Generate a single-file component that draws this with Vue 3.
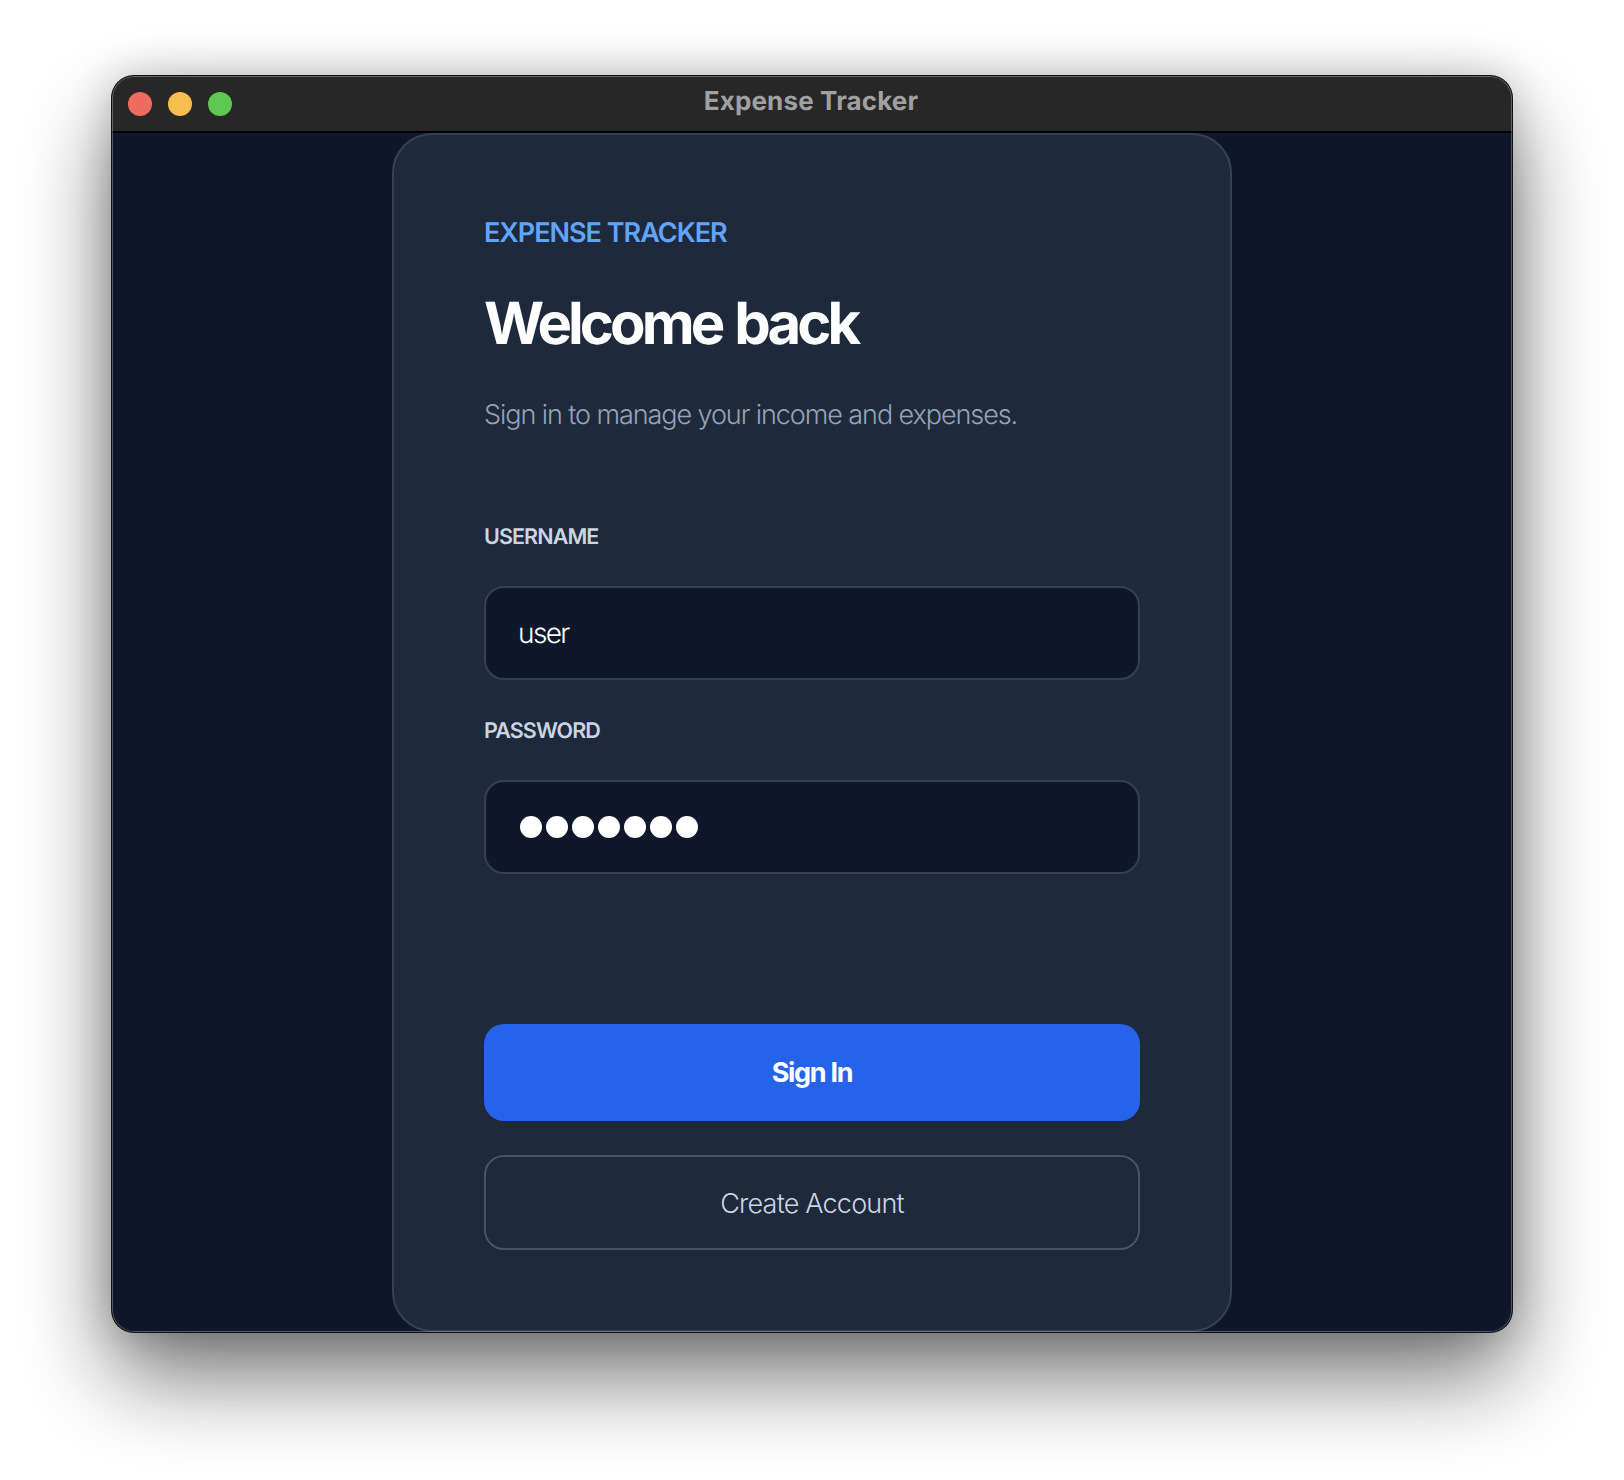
<script setup>
const dots = 7
</script>

<template>
  <div class="stage">
    <div class="window">
      <header class="titlebar">
        <div class="lights">
          <span class="light red"></span>
          <span class="light yellow"></span>
          <span class="light green"></span>
        </div>
        <div class="wintitle">Expense Tracker</div>
      </header>
      <main class="content">
        <section class="card">
          <div class="eyebrow">EXPENSE TRACKER</div>
          <h1 class="title">Welcome back</h1>
          <p class="sub">Sign in to manage your income and expenses.</p>
          <div class="label first">USERNAME</div>
          <div class="field">user</div>
          <div class="label second">PASSWORD</div>
          <div class="field">
            <div class="dots"><span v-for="n in dots" :key="n" class="dot"></span></div>
          </div>
          <button class="btn primary">Sign In</button>
          <button class="btn secondary">Create Account</button>
        </section>
      </main>
    </div>
  </div>
</template>

<style>
html, body { margin: 0; background: #fff; }
</style>

<style scoped>
.stage {
  width: 1624px;
  height: 1480px;
  box-sizing: border-box;
  padding: 76px 112px 148px;
  background: #fff;
  overflow: hidden;
  font-family: Inter, "Noto Sans", sans-serif;
  text-rendering: geometricPrecision;
}
.window {
  position: relative;
  width: 1400px;
  height: 1256px;
  border-radius: 22px;
  overflow: hidden;
  display: flex;
  flex-direction: column;
  background: #0f172a;
  box-shadow: 0 0 0 1px #111, 0 44px 90px rgba(0,0,0,.55), 0 0 40px rgba(0,0,0,.2);
}
.window::after {
  content: "";
  position: absolute;
  inset: 0;
  border-radius: 22px;
  box-shadow: inset 0 0 0 1px rgba(255,255,255,.28);
  pointer-events: none;
}
.titlebar {
  height: 57px;
  flex: none;
  box-sizing: border-box;
  background: #272727;
  border-bottom: 2px solid #000;
  display: flex;
  align-items: center;
  justify-content: center;
  position: relative;
}
.lights {
  position: absolute;
  left: 16px;
  top: 16px;
  display: flex;
  gap: 16px;
}
.light { width: 24px; height: 24px; border-radius: 50%; }
.red { background: #ee6b5f; }
.yellow { background: #f6bd4f; }
.green { background: #5fc853; }
.wintitle {
  color: #a0a0a0;
  font-weight: 700;
  font-size: 26px;
  letter-spacing: .15px;
  margin: 0 2px 5px 0;
}
.content {
  flex: 1;
  min-height: 0;
  display: flex;
  justify-content: center;
}
.card {
  width: 840px;
  box-sizing: border-box;
  background: #1e293b;
  border: 2px solid #334155;
  border-radius: 40px;
  padding: 81px 90px 0;
  display: flex;
  flex-direction: column;
}
.eyebrow {
  color: #60a5fa;
  font-size: 27px;
  line-height: 34px;
  font-weight: 600;
  letter-spacing: -1px;
}
.title {
  margin: 37px 0 0;
  color: #fff;
  font-size: 58px;
  line-height: 72px;
  font-weight: 700;
  letter-spacing: -3.9px;
  word-spacing: 3px;
}
.sub {
  margin: 38px 0 0;
  color: #94a3b8;
  font-size: 27px;
  line-height: 36px;
  font-weight: 300;
  letter-spacing: -1.08px;
}
.label {
  color: #cbd5e1;
  font-size: 21.5px;
  line-height: 28px;
  font-weight: 600;
  letter-spacing: -.9px;
}
.first { margin-top: 90px; }
.second { margin-top: 37px; }
.field {
  margin-top: 35px;
  height: 94px;
  box-sizing: border-box;
  background: #0f172a;
  border: 2px solid #334155;
  border-radius: 20px;
  padding: 0 32px;
  display: flex;
  align-items: center;
  color: #fff;
  font-size: 28px;
  font-weight: 300;
  letter-spacing: -1.6px;
}
.dots { display: flex; gap: 4px; margin-left: 1.5px; }
.dot { width: 22px; height: 22px; border-radius: 50%; background: #fff; }
.btn {
  width: 656px;
  box-sizing: border-box;
  font-family: inherit;
  font-size: 27px;
  border-radius: 20px;
  padding: 0;
}
.primary {
  margin-top: 150px;
  height: 97px;
  border: 0;
  background: #2563eb;
  color: #fff;
  font-weight: 700;
  letter-spacing: -1.3px;
}
.secondary {
  margin-top: 34px;
  height: 95px;
  padding-top: 2px;
  border: 2px solid #475569;
  background: transparent;
  color: #cbd5e1;
  font-weight: 300;
  letter-spacing: -.8px;
}
</style>
